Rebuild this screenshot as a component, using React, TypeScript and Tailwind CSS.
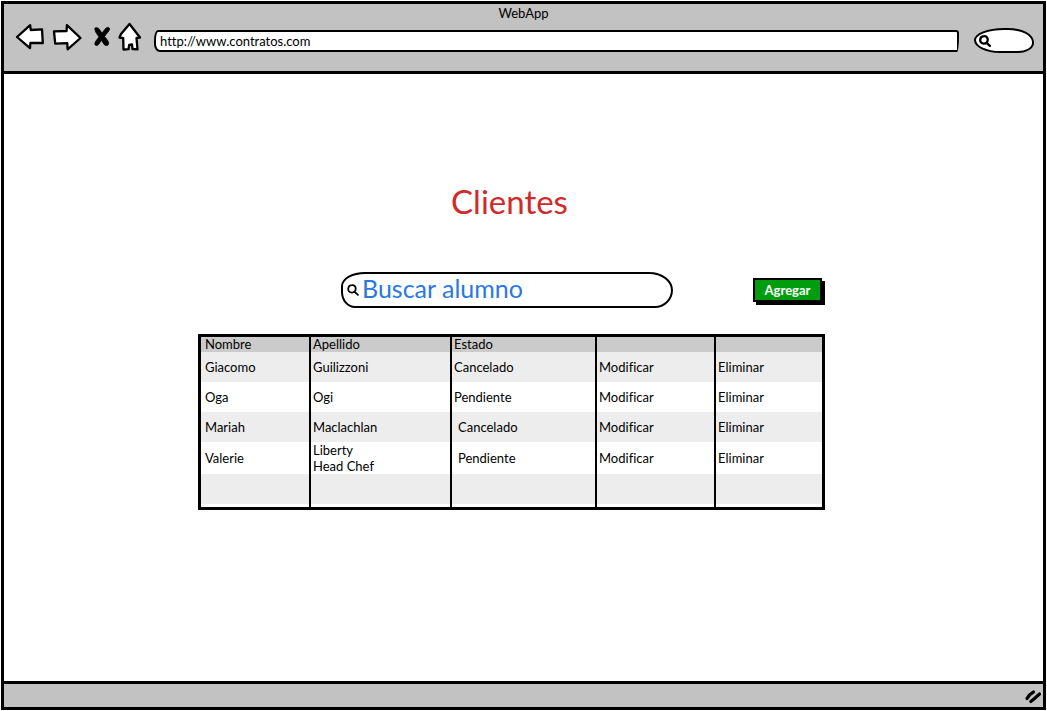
import type { ReactNode } from "react";

type Client = {
  nombre: string;
  apellido: string[];
  estado: string;
  indented?: boolean;
};

const clients: Client[] = [
  { nombre: "Giacomo", apellido: ["Guilizzoni"], estado: "Cancelado" },
  { nombre: "Oga", apellido: ["Ogi"], estado: "Pendiente" },
  { nombre: "Mariah", apellido: ["Maclachlan"], estado: "Cancelado", indented: true },
  { nombre: "Valerie", apellido: ["Liberty", "Head Chef"], estado: "Pendiente", indented: true },
];

function ToolButton({ label, children }: { label: string; children: ReactNode }) {
  return (
    <button type="button" aria-label={label} className="shrink-0">
      {children}
    </button>
  );
}

function SearchIcon({ weight }: { weight: number }) {
  return (
    <svg viewBox="0 0 12 12" className="size-3 shrink-0" fill="none" stroke="black" strokeWidth={weight} strokeLinecap="round" aria-hidden="true">
      <path d="M5 1.2C7.5 1 8.9 2.7 8.7 5C8.6 7.3 6.9 8.7 4.8 8.6C2.5 8.5 1.1 7 1.2 4.900C1.300 2.700 2.800 1.300 5 1.200Z" />
      <path d="M7.600 7.800L10.900 10.900" />
    </svg>
  );
}

function BrowserBar() {
  const shape = { fill: "white", stroke: "black", strokeWidth: 2.3, strokeLinejoin: "round" as const };
  return (
    <header className="h-[70px] border-b-3 border-black bg-[#c2c2c2]">
      <div className="text-center text-[13px] leading-[18px]">WebApp</div>
      <div className="flex h-[30px] items-center pr-[9px] pl-[11px]">
        <ToolButton label="Atrás">
          <svg width="30" height="28" viewBox="0 0 30 28" className="block" {...shape}>
            <path d="M2 14L15.200 2.200L15.700 7L27 6.300L27.800 20L15.400 20L15 25.200Z" />
          </svg>
        </ToolButton>
        <ToolButton label="Adelante">
          <svg width="30" height="28" viewBox="0 0 30 28" className="ml-[7px] block" {...shape}>
            <path d="M2 8.400L14.600 8L14.900 2.200L28.500 15L15.600 26.300L15.300 20.200L3.200 20.600Z" />
          </svg>
        </ToolButton>
        <ToolButton label="Detener">
          <svg width="18" height="28" viewBox="0 0 18 28" className="ml-[11px] block" stroke="black" strokeWidth="0.800" strokeLinejoin="round">
            <path d="M2 5C3.500 4.200 5.500 4.800 6.500 6.500L9 10.200L12.300 5.800C14 3.700 16.800 4.200 16.600 6C16.400 8 13.500 10.500 11.500 13.500C13.500 16 16 18.500 15.600 20.800C15.200 23.300 12 23 10.800 21L8.400 17.200L5.800 21.200C4.500 23.200 1.700 22.800 1.800 20.800C1.900 18.500 4.400 16.500 5.900 13.800C4.300 11.500 2.700 9.500 2.200 7.600C1.900 6.500 1.500 5.500 2 5Z" />
          </svg>
        </ToolButton>
        <ToolButton label="Inicio">
          <svg width="26" height="30" viewBox="0 0 26 30" className="ml-[6px] block" {...shape}>
            <path d="M12.500 2L23 15.500L19.500 16L20.500 27.300L15.500 27L15 22.500L12.200 23L11.500 27.200L6.500 27.500L6.200 16.200L2.500 15.500L4 12Z" />
          </svg>
        </ToolButton>
        <input
          aria-label="Dirección"
          type="text"
          defaultValue="http://www.contratos.com"
          className="mt-2 ml-[11px] h-[22px] min-w-0 flex-1 rounded-[4px_3px_2px_6px/10px_3px_16px_8px] border-2 border-black bg-white px-1 text-[13px] leading-4 outline-none"
        />
        <div className="mt-[7px] ml-[15px] flex h-[25px] w-[60px] items-center rounded-[30px_26px_16px_26px/12px_14px_10px_13px] border-2 border-black bg-white pl-[3px]">
          <SearchIcon weight={2.3} />
          <input aria-label="Buscar en la web" type="search" className="w-9 min-w-0 bg-transparent text-[13px] outline-none" />
        </div>
      </div>
    </header>
  );
}

function ClientsTable() {
  const cell = "border-r-2 border-black p-0 pl-[2px] text-left font-normal last:border-r-0";
  return (
    <div className="border-3 border-black">
      <table className="w-full table-fixed border-separate border-spacing-0 text-[13px] leading-4">
        <colgroup>
          <col className="w-[110px]" />
          <col className="w-[141px]" />
          <col className="w-[145px]" />
          <col className="w-[119px]" />
          <col />
        </colgroup>
        <thead>
          <tr className="h-[15px] bg-[#cbcbcb] leading-[15px]">
            <th className="border-r-2 border-black p-0 pl-1 text-left font-normal">Nombre</th>
            <th className={cell}>Apellido</th>
            <th className={cell}>Estado</th>
            <th className={cell} aria-label="Modificar" />
            <th className={cell} aria-label="Eliminar" />
          </tr>
        </thead>
        <tbody>
          {clients.map((c) => (
            <tr key={c.nombre} className="h-[30px] odd:bg-[#ededed]">
              <td className="border-r-2 border-black p-0 pl-1">{c.nombre}</td>
              <td className={cell}>
                {c.apellido.map((line) => (
                  <div key={line}>{line}</div>
                ))}
              </td>
              <td className={cell}>
                <span className={c.indented ? "pl-1" : ""}>{c.estado}</span>
              </td>
              <td className={cell}>
                <a href="#modificar">Modificar</a>
              </td>
              <td className={cell}>
                <a href="#eliminar">Eliminar</a>
              </td>
            </tr>
          ))}
          <tr className="h-[33px] bg-[linear-gradient(#ededed_30px,white_30px)]">
            <td className={cell} />
            <td className={cell} />
            <td className={cell} />
            <td className={cell} />
            <td className={cell} />
          </tr>
        </tbody>
      </table>
    </div>
  );
}

export default function App() {
  return (
    <div className="flex min-h-screen flex-col bg-white p-px font-['Lato',sans-serif] text-black [font-variant-ligatures:none]">
      <div className="flex flex-1 flex-col border-3 border-black">
        <BrowserBar />
        <main className="flex-1 pr-6">
          <div className="mx-auto w-full max-w-[627px]">
            <h1 className="pt-[107px] pr-1 text-center text-[33px] leading-10 text-[#d12a2a]">Clientes</h1>
            <div className="mt-[51px] flex items-center justify-between pl-[143px]">
              <div className="flex h-9 w-[332px] items-center rounded-[24px_24px_18px_14px/14px_18px_18px_16px] border-2 border-black bg-white pl-1">
                <SearchIcon weight={1.8} />
                <input
                  aria-label="Buscar alumno"
                  type="text"
                  placeholder="Buscar alumno"
                  className="mb-1 ml-[3px] h-8 min-w-0 flex-1 bg-transparent text-[25px] leading-8 outline-none placeholder:text-[#2b78e4] placeholder:opacity-100"
                />
              </div>
              <button
                type="button"
                className="mr-[3px] h-6 w-[69px] border-2 border-black bg-[#009e0f] text-[13px] leading-4 font-bold text-white shadow-[3px_3px_0_black]"
              >
                Agregar
              </button>
            </div>
            <div className="mt-[26px]">
              <ClientsTable />
            </div>
          </div>
        </main>
        <footer className="flex h-[26px] items-center justify-end border-t-3 border-black bg-[#c2c2c2]">
          <svg width="19" height="18" viewBox="0 0 19 18" fill="none" stroke="black" strokeWidth="3.200" strokeLinecap="round" aria-hidden="true">
            <path d="M3 11.500L5.500 8L9.500 5" />
            <path d="M6.800 14.500L10.500 11.500L15.500 7" />
          </svg>
        </footer>
      </div>
    </div>
  );
}
